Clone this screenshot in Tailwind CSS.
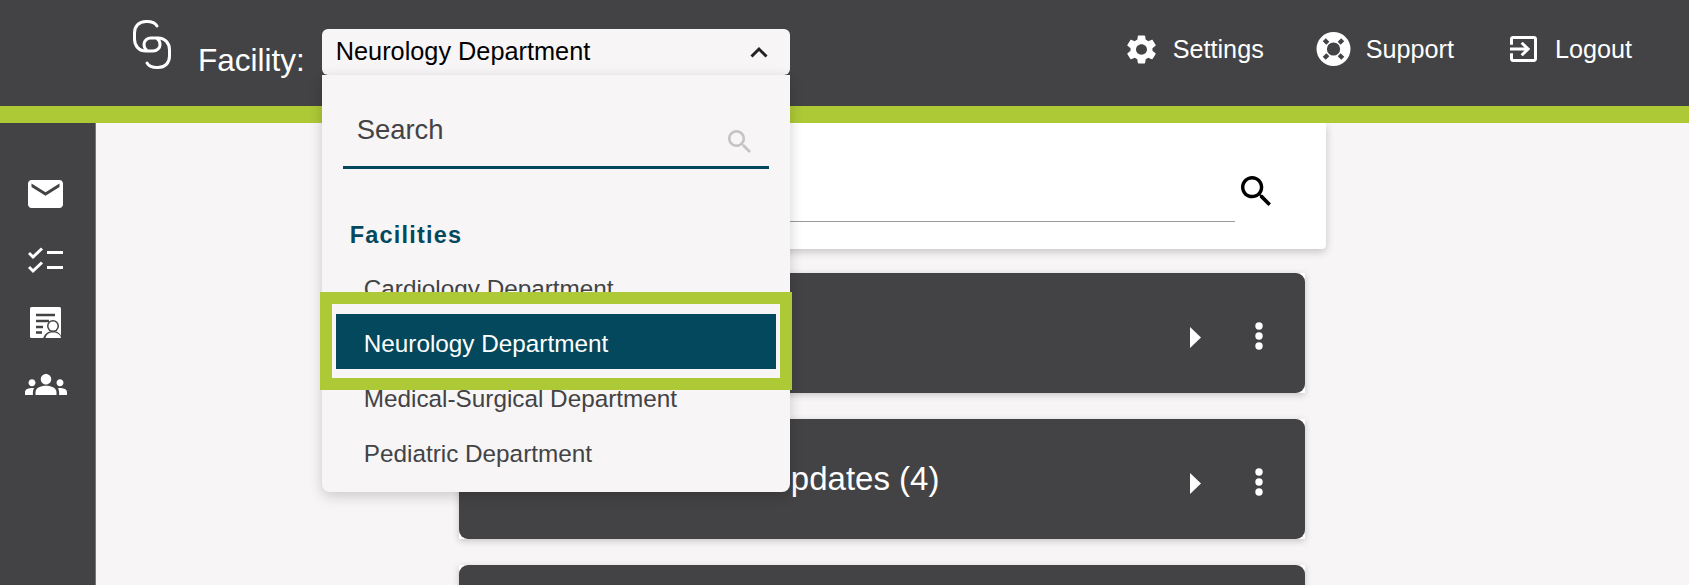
<!DOCTYPE html>
<html lang="en">
  <head>
    <meta charset="UTF-8" />
    <title>Facility Selector</title>
    <meta name="viewport" content="width=device-width, initial-scale=1.0" />
    <script src="https://cdn.jsdelivr.net/npm/@tailwindcss/browser@4"></script>
  </head>
  <body class="h-[585px] overflow-hidden bg-[#f7f5f6] font-['Liberation_Sans',Arial,sans-serif]">
    <!-- Top bar -->
    <header class="relative z-10 flex h-[123px] border-b-[17px] border-[#adc936] bg-[#434345] text-white">
      <div class="flex pl-[133px]">
        <svg class="mt-[20px] h-[49px] w-[38px]" viewBox="0 0 38 49" fill="none" stroke="currentColor" stroke-width="3" stroke-linecap="round">
          <path d="M24 6C22 2.500 18 1.500 14 1.500H13C6 1.500 1.500 6 1.500 13V19C1.500 26 6 31 13 31H20C24 31 27 28 27 25C27 22 26 20 24.500 19" />
          <path d="M14 43C16 46.500 20 47.500 24 47.500H25C32 47.500 36.500 43 36.500 36V30C36.500 23 32 18 25 18H18C14 18 11 21 11 24C11 27 12 29 13.500 30" />
        </svg>
        <span class="ml-[27px] mt-[42px] text-[31.500px] leading-[36px]">Facility:</span>

        <!-- Facility dropdown -->
        <div class="relative ml-[17px] mt-[29px] h-[46px] w-[468px]">
          <div class="flex h-[46px] items-center justify-between rounded-[6px] bg-[#f7f5f6] pl-[14px] pr-[22px] text-[25.300px] text-black">
            <span>Neurology Department</span>
            <svg class="h-[12px] w-[18px]" viewBox="0 0 18 12" fill="none" stroke="#222" stroke-width="3"><path d="M1.500 10.500L9 3l7.500 7.500" /></svg>
          </div>
          <div class="absolute left-0 top-[46px] h-[417px] w-[468px] rounded-b-[8px] bg-[#f7f5f6] px-[21px] pt-[20px] shadow-[0_4px_14px_rgba(0,0,0,0.18)]">
            <div class="flex h-[74px] justify-between border-b-[3px] border-[#03485c] pl-[14px] pr-[18px]">
              <span class="mt-[20px] text-[27.400px] leading-[30px] text-[#434345]">Search</span>
              <svg class="mt-[35px] h-[23px] w-[23px]" viewBox="3 3 17.500 17.500" fill="#c4c4c4"><path d="M15.500 14h-.790l-.280-.270C15.410 12.590 16 11.110 16 9.500 16 5.910 13.090 3 9.500 3S3 5.910 3 9.500 5.910 16 9.500 16c1.610 0 3.090-.590 4.230-1.570l.270.280v.790l5 4.990L20.490 19l-4.990-5zm-6 0C7.010 14 5 11.990 5 9.500S7.010 5 9.500 5 14 7.010 14 9.500 11.990 14 9.500 14z" /></svg>
            </div>
            <p class="ml-[7px] mt-[51px] text-[23.500px] leading-[30px] font-bold tracking-[1.200px] text-[#03485c]">Facilities</p>
            <ul class="ml-[21px] mt-[11px] text-[24.300px] leading-[55px] text-[#434345]">
              <li>Cardiology Department</li>
              <li>Neurology Department</li>
              <li>Medical-Surgical Department</li>
              <li>Pediatric Department</li>
            </ul>
            <!-- Highlight callout over the selected item -->
            <div class="absolute left-[-2px] top-[217px] h-[98px] w-[472px] border-[12px] border-[#adc936] bg-[#f7f5f6] px-[4px] py-[10px]">
              <div class="flex h-[55px] items-center bg-[#03485c] pl-[28px] pt-[5px] text-[24.300px] text-white">Neurology Department</div>
            </div>
          </div>
        </div>
      </div>

      <nav class="ml-auto flex h-[98px] items-center pr-[57px] text-[25.200px] leading-[30px]">
        <svg class="h-[29px] w-[29px]" viewBox="2.500 2 19 20" preserveAspectRatio="none" fill="currentColor"><path d="M19.140 12.940c.040-.300.060-.610.060-.940 0-.320-.020-.640-.070-.940l2.030-1.580c.180-.140.230-.410.120-.610l-1.920-3.320c-.120-.220-.370-.290-.590-.220l-2.390.960c-.500-.380-1.030-.700-1.620-.940l-.360-2.540c-.040-.240-.240-.410-.480-.410h-3.840c-.240 0-.430.170-.470.410l-.360 2.540c-.590.240-1.130.570-1.620.940l-2.390-.960c-.220-.080-.470 0-.590.220L2.740 8.870c-.120.210-.080.470.120.610l2.030 1.580c-.050.300-.090.630-.090.940s.020.640.070.940l-2.030 1.580c-.180.140-.230.410-.120.610l1.920 3.320c.120.220.370.290.590.220l2.390-.960c.500.380 1.030.700 1.620.940l.360 2.540c.050.240.240.410.480.410h3.840c.240 0 .440-.170.470-.410l.360-2.540c.590-.240 1.130-.560 1.620-.940l2.390.960c.220.080.470 0 .590-.220l1.920-3.320c.120-.220.070-.470-.120-.610l-2.010-1.580zM12 15.600c-1.980 0-3.600-1.620-3.600-3.600s1.620-3.600 3.600-3.600 3.600 1.620 3.600 3.600-1.620 3.600-3.600 3.600z" /></svg>
        <span class="ml-[17px]">Settings</span>
        <svg class="ml-[52px] h-[34px] w-[35px]" viewBox="0 0 36 36">
          <circle cx="18" cy="18" r="18" fill="#fff" />
          <circle cx="18" cy="18" r="7" fill="#434345" />
          <path d="M8.200 8.200L12 12M27.800 8.200L24 12M8.200 27.800L12 24M27.800 27.800L24 24" stroke="#434345" stroke-width="4.500" />
        </svg>
        <span class="ml-[15px]">Support</span>
        <svg class="ml-[56px] h-[26px] w-[27px]" viewBox="3 3 18 18" preserveAspectRatio="none" fill="currentColor"><path d="M10.090 15.590L11.500 17l5-5-5-5-1.410 1.410L12.670 11H3v2h9.670l-2.580 2.590zM19 3H5c-1.110 0-2 .900-2 2v4h2V5h14v14H5v-4H3v4c0 1.100.890 2 2 2h14c1.100 0 2-.900 2-2V5c0-1.100-.900-2-2-2z" /></svg>
        <span class="ml-[18px]">Logout</span>
      </nav>
    </header>

    <div class="flex h-[462px] overflow-hidden">
      <!-- Side rail -->
      <aside class="flex w-[96px] flex-col items-center border-r border-[#77777a] bg-[#434345] pr-[4px] text-white">
        <svg class="mt-[57px] h-[28px] w-[35px]" viewBox="2 4 20 16" preserveAspectRatio="none" fill="currentColor"><path d="M20 4H4c-1.100 0-1.990.900-1.990 2L2 18c0 1.100.900 2 2 2h16c1.100 0 2-.900 2-2V6c0-1.100-.900-2-2-2zm0 4l-8 5-8-5V6l8 5 8-5v2z" /></svg>
        <svg class="mt-[39px] h-[27px] w-[35px]" viewBox="0 0 35 27" fill="none" stroke="currentColor" stroke-width="3">
          <path d="M1 6l4 4 9-8.500M1 20l4 4 9-8.500M19 5.500h16M19 20.500h16" />
        </svg>
        <svg class="mt-[33px] h-[32px] w-[32px]" viewBox="0 0 32 32">
          <rect x="0" y="0" width="31" height="31" rx="1.500" fill="#fff" />
          <path d="M6 8h19M6 14h13M6 20h7M6 25.500h6" stroke="#434345" stroke-width="2.500" />
          <circle cx="23" cy="19" r="6" fill="#434345" />
          <path d="M13 32C14 27 18 24 23 24S31 27 32 32z" fill="#434345" />
          <circle cx="23" cy="19" r="4.500" fill="#fff" />
          <path d="M15.500 31C16 27.500 19 25.500 23 25.500S30.500 27.500 31 31z" fill="#fff" />
        </svg>
        <svg class="mt-[35px] h-[21px] w-[42px]" viewBox="0 6 24 12" preserveAspectRatio="none" fill="currentColor"><path d="M12 12.750c1.630 0 3.070.390 4.240.900 1.080.480 1.760 1.560 1.760 2.730V18H6v-1.610c0-1.180.680-2.260 1.760-2.730 1.170-.520 2.610-.910 4.240-.910zM4 13c1.100 0 2-.900 2-2s-.900-2-2-2-2 .900-2 2 .900 2 2 2zm1.130 1.100C4.760 14.040 4.390 14 4 14c-.990 0-1.930.210-2.780.580C.480 14.900 0 15.620 0 16.430V18h4.500v-1.610c0-.830.230-1.610.630-2.290zM20 13c1.100 0 2-.900 2-2s-.900-2-2-2-2 .900-2 2 .900 2 2 2zm4 3.430c0-.810-.480-1.530-1.220-1.850C21.930 14.210 20.990 14 20 14c-.390 0-.760.040-1.130.100.400.680.630 1.460.630 2.290V18H24v-1.570zM12 6c1.660 0 3 1.340 3 3s-1.340 3-3 3-3-1.340-3-3 1.340-3 3-3z" /></svg>
      </aside>

      <main class="flex-1 overflow-hidden">
        <!-- Search card -->
        <section class="ml-[344px] flex h-[126px] w-[886px] items-start rounded-b-[4px] bg-white pl-[30px] shadow-[0_3px_8px_rgba(0,0,0,0.2)]">
          <div class="h-[99px] flex-1 border-b border-[#9a9a9a]"></div>
          <svg class="ml-[6px] mr-[55px] mt-[53px] h-[30px] w-[30px]" viewBox="3 3 17.500 17.500" preserveAspectRatio="none" fill="#000"><path d="M15.500 14h-.790l-.280-.270C15.410 12.590 16 11.110 16 9.500 16 5.910 13.090 3 9.500 3S3 5.910 3 9.500 5.910 16 9.500 16c1.610 0 3.090-.590 4.230-1.570l.270.280v.790l5 4.990L20.490 19l-4.990-5zm-6 0C7.010 14 5 11.990 5 9.500S7.010 5 9.500 5 14 7.010 14 9.500 11.990 14 9.500 14z" /></svg>
        </section>

        <!-- Collapsible sections -->
        <div class="ml-[363px] mt-[24px] flex w-[846px] flex-col gap-[26px]">
          <div class="bg-white shadow-[0_2px_7px_rgba(0,0,0,0.2)]">
            <div class="flex h-[120px] items-center rounded-[9px] bg-[#434345] pr-[41px] text-white">
              <svg class="ml-auto mt-[8px] h-[21px] w-[11px]" viewBox="0 0 11 21" fill="currentColor"><path d="M0 0l11 10.500L0 21z" /></svg>
              <svg class="ml-[53px] mt-[6px] h-[28px] w-[10px]" viewBox="0 0 10 28" fill="currentColor"><circle cx="5" cy="4" r="3.700" /><circle cx="5" cy="14" r="3.700" /><circle cx="5" cy="24" r="3.700" /></svg>
            </div>
          </div>
          <div class="bg-white shadow-[0_2px_7px_rgba(0,0,0,0.2)]">
            <div class="flex h-[120px] items-center rounded-[9px] bg-[#434345] pl-[308px] pr-[41px] text-white">
              <span class="text-[33px]">Updates (4)</span>
              <svg class="ml-auto mt-[8px] h-[21px] w-[11px]" viewBox="0 0 11 21" fill="currentColor"><path d="M0 0l11 10.500L0 21z" /></svg>
              <svg class="ml-[53px] mt-[6px] h-[28px] w-[10px]" viewBox="0 0 10 28" fill="currentColor"><circle cx="5" cy="4" r="3.700" /><circle cx="5" cy="14" r="3.700" /><circle cx="5" cy="24" r="3.700" /></svg>
            </div>
          </div>
          <div class="bg-white shadow-[0_2px_7px_rgba(0,0,0,0.2)]">
            <div class="h-[120px] rounded-[9px] bg-[#434345]"></div>
          </div>
        </div>
      </main>
    </div>
  </body>
</html>
